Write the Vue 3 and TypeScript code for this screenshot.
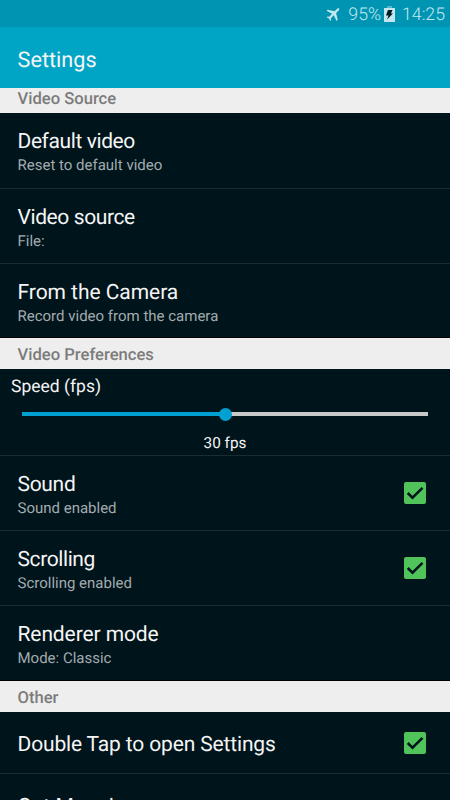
<script setup lang="ts">
import { ref } from 'vue'

interface Item {
  title: string
  tracking: number
  summary?: string
  checked?: boolean
}

const sourceItems: Item[] = [
  { title: 'Default video', tracking: -0.4, summary: 'Reset to default video' },
  { title: 'Video source', tracking: -0.4, summary: 'File:' },
  { title: 'From the Camera', tracking: -0.05, summary: 'Record video from the camera' },
]
const preferenceItems = ref<Item[]>([
  { title: 'Sound', tracking: -0.3, summary: 'Sound enabled', checked: true },
  { title: 'Scrolling', tracking: -0.4, summary: 'Scrolling enabled', checked: true },
  { title: 'Renderer mode', tracking: -0.1, summary: 'Mode: Classic' },
])
const otherItems = ref<Item[]>([
  { title: 'Double Tap to open Settings', tracking: -0.15, checked: true },
  { title: 'Get Mosaic', tracking: 0.15 },
])
const fps = ref(30)

function toggle(item: Item) {
  if (item.checked !== undefined) item.checked = !item.checked
}
</script>

<template>
  <div class="screen">
    <div class="status">
      <svg class="plane" viewBox="0 0 24 24"><path d="M21 16v-2l-8-5V3.500a1.500 1.500 0 0 0-3 0V9l-8 5v2l8-2.500V19l-2 1.500V22l3.500-1 3.500 1v-1.500L13 19v-5.500z" /></svg>
      <span class="percent">95%</span>
      <svg class="battery" viewBox="0 0 11 16"><path class="cap" d="M3 0h5v2H3z" /><path class="shell" d="M0 2h11v14H0z" /><path class="bolt" d="M4 4h4.500L7 7.500h2L3 13.500 4.500 9.500H2z" /></svg>
      <span class="clock">14:25</span>
    </div>
    <header class="appbar">Settings</header>
    <main class="list">
      <h2 class="section first">Video Source</h2>
      <div v-for="item in sourceItems" :key="item.title" class="row source">
        <div class="labels">
          <div class="title" :style="{ letterSpacing: item.tracking + 'px' }">{{ item.title }}</div>
          <div class="summary">{{ item.summary }}</div>
        </div>
      </div>
      <h2 class="section">Video Preferences</h2>
      <div class="speed">
        <div class="speed-title">Speed (fps)</div>
        <div class="slider">
          <div class="filled" :style="{ width: (fps / 60) * 100 + '%' }"></div>
          <div class="thumb"></div>
          <div class="remaining"></div>
        </div>
        <div class="speed-value">{{ fps }} fps</div>
      </div>
      <div v-for="item in preferenceItems" :key="item.title" class="row" @click="toggle(item)">
        <div class="labels">
          <div class="title" :style="{ letterSpacing: item.tracking + 'px' }">{{ item.title }}</div>
          <div class="summary">{{ item.summary }}</div>
        </div>
        <svg v-if="item.checked !== undefined" class="check" viewBox="0 0 22 22"><rect width="22" height="22" rx="2" /><path v-if="item.checked" d="M3.700 11l4.800 4.700L18.500 5.800" /></svg>
      </div>
      <h2 class="section">Other</h2>
      <div v-for="item in otherItems" :key="item.title" class="row single" @click="toggle(item)">
        <div class="title" :style="{ letterSpacing: item.tracking + 'px' }">{{ item.title }}</div>
        <svg v-if="item.checked !== undefined" class="check" viewBox="0 0 22 22"><rect width="22" height="22" rx="2" /><path v-if="item.checked" d="M3.700 11l4.800 4.700L18.500 5.800" /></svg>
      </div>
    </main>
  </div>
</template>

<style>
body {
  margin: 0;
  overflow: hidden;
}
</style>

<style scoped>
.screen {
  width: 450px;
  height: 800px;
  overflow: hidden;
  display: flex;
  flex-direction: column;
  background: #00141b;
  color: #f5f5f5;
  font-family: Roboto, sans-serif;
  text-rendering: geometricPrecision;
}
.status {
  height: 27px;
  flex: none;
  box-sizing: border-box;
  padding: 3px 5px 0 0;
  display: flex;
  align-items: center;
  justify-content: flex-end;
  background: #0094b3;
  color: #c2e7ef;
  font-size: 17.700px;
  font-weight: 300;
}
.plane {
  width: 18px;
  height: 18px;
  margin: -2px 5px 0 0;
  fill: #c2e7ef;
  transform: rotate(45deg);
}
.battery {
  width: 11px;
  height: 16px;
  margin: -2px 7px 0 3px;
}
.shell {
  fill: #c2e7ef;
}
.cap {
  fill: #58b7ca;
}
.bolt {
  fill: #001d24;
}
.appbar {
  height: 61px;
  flex: none;
  box-sizing: border-box;
  padding: 5px 17.500px 0;
  display: flex;
  align-items: center;
  background: #00a5c6;
  font-size: 21.700px;
}
.list {
  flex: 1;
  min-height: 0;
  overflow: hidden;
}
.section {
  height: 31px;
  box-sizing: border-box;
  margin: 0;
  padding-left: 17.500px;
  background: #eee;
  color: #7c7c7c;
  font-size: 16.600px;
  line-height: 35px;
  font-weight: 500;
}
.section.first {
  height: 25px;
  line-height: 23px;
}
.row {
  height: 75px;
  box-sizing: border-box;
  padding: 0 24px 0 17.500px;
  display: flex;
  align-items: center;
  justify-content: space-between;
  border-bottom: 1px solid #1a2c32;
}
.row.source {
  padding-bottom: 1px;
}
.row:has(+ .section) {
  border-bottom-color: #000;
}
.section.first + .row {
  height: 76px;
  padding-bottom: 2px;
}
.row:has(+ .section + .speed) {
  height: 74px;
  padding-bottom: 0;
}
.title {
  padding-top: 4px;
  font-size: 21px;
  line-height: 26px;
}
.summary {
  color: #a2abae;
  font-size: 15px;
  line-height: 20px;
}
.row.single {
  height: 62px;
}
.check {
  width: 22px;
  height: 22px;
}
.check rect {
  fill: #50c45b;
}
.check path {
  fill: none;
  stroke: #00141b;
  stroke-width: 2.500;
}
.speed {
  height: 87px;
  box-sizing: border-box;
  padding: 7px 22px 0;
  border-bottom: 1px solid #1a2c32;
}
.speed-title {
  margin-left: -11px;
  font-size: 17.500px;
  line-height: 22px;
}
.slider {
  height: 14px;
  margin-top: 9px;
  display: flex;
  align-items: center;
}
.filled {
  height: 4px;
  background: #00a0d2;
}
.thumb {
  width: 13px;
  height: 13px;
  flex: none;
  margin: 0 -6.500px;
  border-radius: 50%;
  background: #00a0d2;
  z-index: 1;
}
.remaining {
  height: 4px;
  flex: 1;
  background: #c8c8c8;
}
.speed-value {
  margin-top: 12px;
  text-align: center;
  font-size: 15.300px;
  line-height: 20px;
}
</style>
